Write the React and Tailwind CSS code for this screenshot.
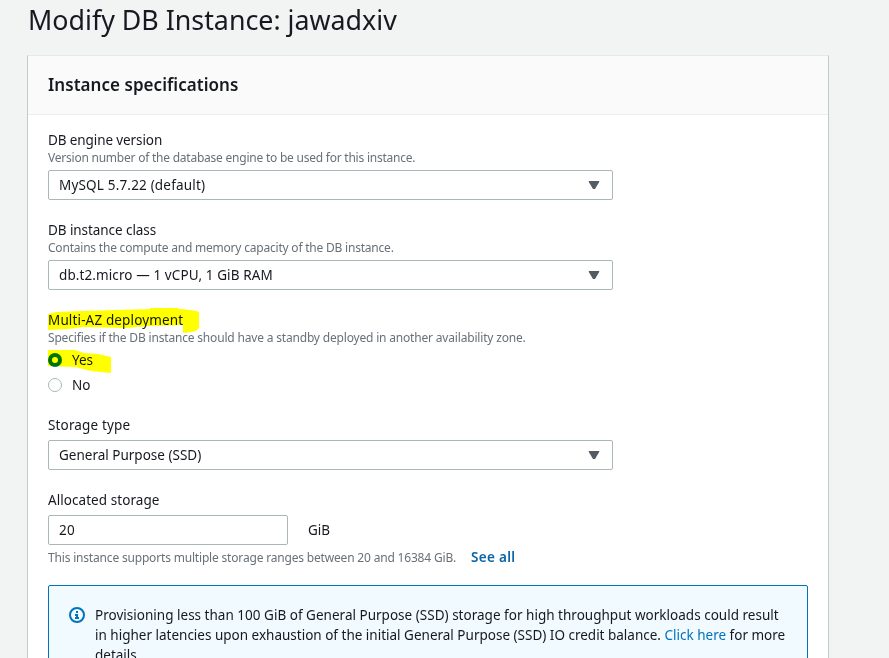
function SelectBox({ children, track = "" }) {
  return (
    <div className="flex h-[30px] w-[565px] items-center justify-between rounded-[2px] border border-[#aab7b8] bg-white pl-2.5 pr-3">
      <span className={track}>{children}</span>
      <svg width="12" height="8" viewBox="0 0 12 8" className="block">
        <path d="M0.8 0h10.4v1L7 8H5L0.8 1z" fill="#545b64" />
      </svg>
    </div>
  );
}

function Label({ children, track = "" }) {
  return (
    <div className="h-5 leading-5">
      <span className={track}>{children}</span>
    </div>
  );
}

function Hint({ children, track = "" }) {
  return (
    <div className="h-[15px] text-[12px] leading-[15px] text-[#687078]">
      <span className={track}>{children}</span>
    </div>
  );
}

export default function App() {
  return (
    <div className="h-[658px] w-[889px] overflow-hidden whitespace-nowrap bg-[#f2f3f3] pl-[27px] font-['Noto_Sans',sans-serif] text-[13.5px] leading-5 text-[#16191f]">
      <h1 className="h-[55px] pl-px pt-0.5 text-[26.8px] leading-9">Modify DB Instance: jawadxiv</h1>
      <section className="h-[640px] w-[802px] border border-x-[#c3c8c8] border-t-[#e6e9e9] bg-white">
        <header className="flex h-[59px] items-center border-b border-[#eaeded] bg-[#fafafa] pl-5 text-[17px] font-semibold tracking-[0.04px]">
          <h2>Instance specifications</h2>
        </header>
        <div className="px-5 pt-[15px]">
          <div className="mb-5">
            <Label track="tracking-[-0.1px]">DB engine version</Label>
            <Hint track="tracking-[-0.23px]">Version number of the database engine to be used for this instance.</Hint>
            <div className="pt-[5px]"><SelectBox track="tracking-[0.18px]">MySQL 5.7.22 (default)</SelectBox></div>
          </div>
          <div className="mb-5">
            <Label track="tracking-[-0.07px]">DB instance class</Label>
            <Hint track="tracking-[-0.21px]">Contains the compute and memory capacity of the DB instance.</Hint>
            <div className="pt-[5px]"><SelectBox track="tracking-[0.1px]">db.t2.micro — 1 vCPU, 1 GiB RAM</SelectBox></div>
          </div>
          <div className="relative mb-5">
            <Label track="tracking-[0.14px]">Multi-AZ deployment</Label>
            <Hint track="tracking-[-0.18px]">Specifies if the DB instance should have a standby deployed in another availability zone.</Hint>
            <div className="mt-[5px] flex h-5 items-center gap-2.5">
              <span className="h-3.5 w-3.5 rounded-full border-4 border-[#0073bb] bg-white" />
              <span>Yes</span>
            </div>
            <div className="mt-[5px] flex h-5 items-center gap-2.5">
              <span className="h-3.5 w-3.5 rounded-full border border-[#aab7b8] bg-white" />
              <span>No</span>
            </div>
            <svg className="absolute left-0 top-[-2px] mix-blend-multiply" width="160" height="70" viewBox="0 0 160 70">
              <path d="M0 6L8 4L34 3L70 2L102 1V0L130 0V1H134L142 2L148 3L151 4V20L148 23L144 24L135 25V17L102 18L77 20L35 19L20 21L0 22z" fill="#ff0" />
              <path d="M0 42L27 42L36 45L50 46L63 49L63 65L43 63L27 59L0 58z" fill="#ff0" />
            </svg>
          </div>
          <div className="mb-5">
            <Label track="tracking-[0.15px]">Storage type</Label>
            <div className="pt-[5px]"><SelectBox>General Purpose (SSD)</SelectBox></div>
          </div>
          <div>
            <Label track="tracking-[0.06px]">Allocated storage</Label>
            <div className="mt-[5px] flex items-center gap-5">
              <div className="flex h-[30px] w-60 items-center rounded-[2px] border border-[#aab7b8] bg-white pl-2.5 tracking-[0.2px]">20</div>
              <span>GiB</span>
            </div>
            <div className="flex h-[25px] items-center">
              <span className="w-[423px] text-[12px] tracking-[-0.18px] text-[#687078]">This instance supports multiple storage ranges between 20 and 16384 GiB.</span>
              <a className="pb-px font-semibold tracking-[0.3px] text-[#0a66a8]">See all</a>
            </div>
          </div>
          <div className="mt-[15px] flex h-[120px] w-[760px] rounded-[2px] border border-[#0073bb] bg-[#f1faff] pl-5 pt-[19px]">
            <svg width="16" height="16" viewBox="0 0 16 16" className="mr-2.5 mt-0.5 shrink-0" fill="none">
              <circle cx="8" cy="8" r="7" stroke="#0073bb" strokeWidth="2" />
              <path d="M7 4h2v2H7zM6 7h3v3h1v2H6v-2h1V9H6z" fill="#0073bb" />
            </svg>
            <p>
              <span className="tracking-[0.015px]">Provisioning less than 100 GiB of General Purpose (SSD) storage for high throughput workloads could result</span><br />
              <span>in higher latencies upon exhaustion of the initial General Purpose (SSD) IO credit balance. <a className="text-[#0073bb]">Click here</a> for more</span><br />
              <span>details.</span>
            </p>
          </div>
        </div>
      </section>
    </div>
  );
}
